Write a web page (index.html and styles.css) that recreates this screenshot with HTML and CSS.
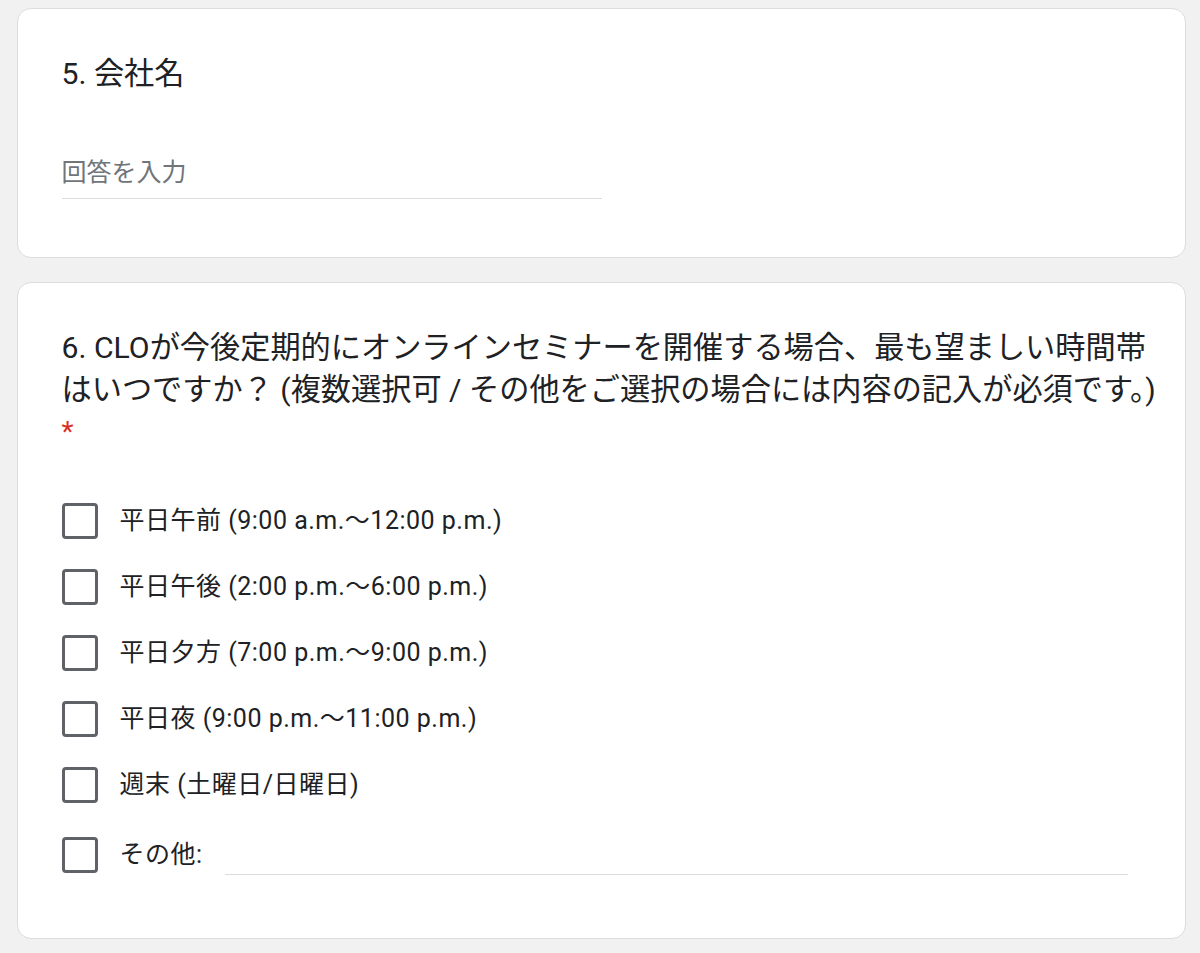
FILE: index.html
```html
<!DOCTYPE html>
<html lang="ja">
<head>
<meta charset="utf-8">
<title>Form</title>
<link rel="stylesheet" href="styles.css">
</head>
<body>
<main class="form">
  <section class="card card-short">
    <h2 class="q-title">5. 会社名</h2>
    <input class="text-input" type="text" placeholder="回答を入力">
  </section>
  <section class="card card-choices">
    <h2 class="q-title q-long">6. CLOが今後定期的にオンラインセミナーを開催する場合、最も望ましい時間帯<br>はいつですか？ (複数選択可 / その他をご選択の場合には内容の記入が必須です。)<span class="req">*</span></h2>
    <ul class="options">
      <li class="option"><span class="box"></span><span class="label">平日午前 (9:00 a.m.〜12:00 p.m.)</span></li>
      <li class="option"><span class="box"></span><span class="label">平日午後 (2:00 p.m.〜6:00 p.m.)</span></li>
      <li class="option"><span class="box"></span><span class="label">平日夕方 (7:00 p.m.〜9:00 p.m.)</span></li>
      <li class="option"><span class="box"></span><span class="label">平日夜 (9:00 p.m.〜11:00 p.m.)</span></li>
      <li class="option"><span class="box"></span><span class="label">週末 (土曜日/日曜日)</span></li>
      <li class="option option-other"><span class="box"></span><span class="label">その他:</span><span class="other-line"></span></li>
    </ul>
  </section>
</main>
</body>
</html>
```

FILE: styles.css
```css
* { box-sizing: border-box; }

html, body {
  margin: 0;
  padding: 0;
  background: #f1f1f1;
}

body {
  font-family: Roboto, "Noto Sans CJK JP", sans-serif;
  color: #202124;
}

.form {
  display: flex;
  flex-direction: column;
  gap: 24px;
  padding: 8px 14px 14px 17px;
}

.card {
  background: #fff;
  border: 1.5px solid #dadce0;
  border-radius: 14px;
  padding: 43.5px 8px 0 43.5px;
}

.card-short {
  height: 250px;
}

.card-choices {
  height: 657px;
}

.q-title {
  margin: 0;
  font-size: 30.2px;
  line-height: 42px;
  font-weight: 400;
  color: #202124;
}

.q-long {
  white-space: nowrap;
}

.req {
  display: block;
  color: #d93025;
  font-size: 28px;
  line-height: 42px;
}

.text-input {
  display: block;
  margin-top: 60px;
  width: 540px;
  border: 0;
  border-bottom: 1.5px solid #dadce0;
  padding: 0 0 7px 0;
  font-family: Roboto, "Noto Sans CJK JP", sans-serif;
  font-size: 25px;
  line-height: 35px;
  height: 44px;
  color: #202124;
  background: transparent;
  outline: none;
}

.text-input::placeholder {
  color: #70757a;
}

.options {
  list-style: none;
  margin: 35px 0 0 0;
  padding: 0;
}

.option {
  display: flex;
  align-items: center;
  height: 66px;
}

.option-other {
  margin-top: 4px;
}

.box {
  flex: none;
  width: 36px;
  height: 36px;
  border: 3.5px solid #5f6368;
  border-radius: 4px;
}

.label {
  margin-left: 22px;
  font-size: 25px;
  line-height: 35px;
  letter-spacing: 0.5px;
  color: #202124;
  white-space: nowrap;
}

.other-line {
  flex: 1;
  align-self: flex-end;
  margin: 0 49px 13px 22px;
  border-bottom: 1.5px solid #dadce0;
  height: 1px;
}
```
